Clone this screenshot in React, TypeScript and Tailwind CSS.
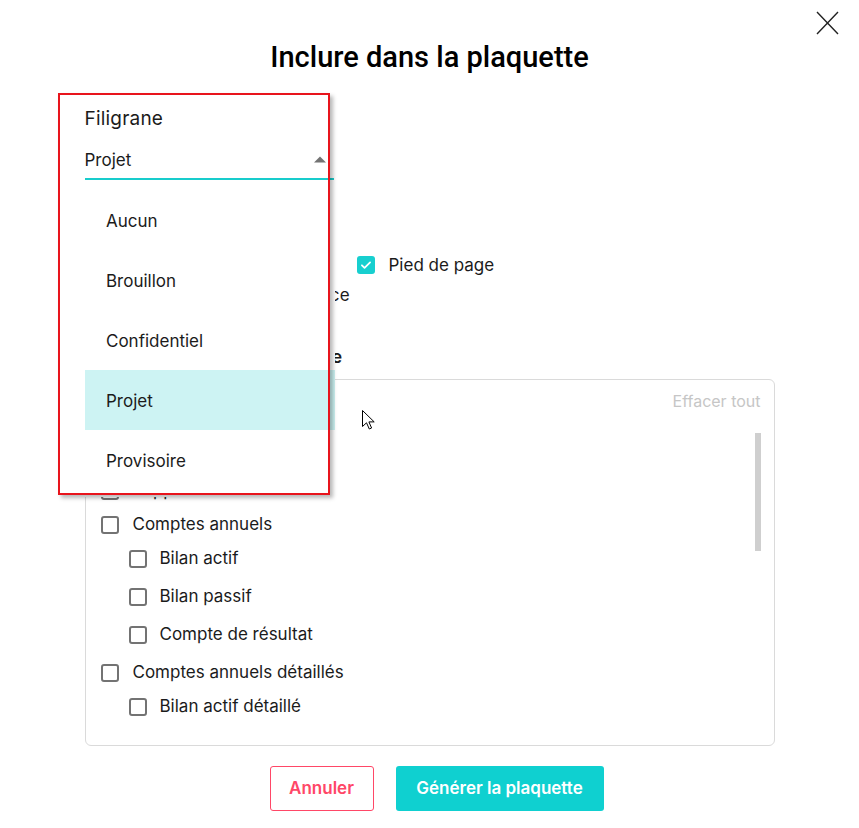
const Box = ({ checked = false }: { checked?: boolean }) =>
  checked ? (
    <span className="flex h-[18px] w-[18px] shrink-0 items-center justify-center rounded-[3px] bg-[#17cfcf]">
      <svg width="14" height="14" viewBox="0 0 24 24" fill="none">
        <path d="M5 12.5l4.5 4.5L19 7.5" stroke="#fff" strokeWidth="3" strokeLinecap="round" strokeLinejoin="round" />
      </svg>
    </span>
  ) : (
    <span className="h-[18px] w-[18px] shrink-0 rounded-[3px] border-2 border-[#737373] bg-white" />
  );

const tree = [
  { label: "Page de garde", children: [] as string[] },
  { label: "Rapport de mission", children: [] as string[] },
  { label: "Comptes annuels", children: ["Bilan actif", "Bilan passif", "Compte de résultat"] },
  { label: "Comptes annuels détaillés", children: ["Bilan actif détaillé"] },
];

const options = ["Aucun", "Brouillon", "Confidentiel", "Projet", "Provisoire"];

export default function App() {
  return (
    <div className="relative h-[828px] w-[859px] overflow-hidden bg-white font-['Inter',sans-serif] text-[17px] text-[#1b1b1b]">
      <button className="absolute left-[816px] top-[11px]">
        <svg width="23" height="24" viewBox="0 0 23 24" fill="none">
          <path d="M1 1L22 23M22 1L1 23" stroke="#222" strokeWidth="1.4" />
        </svg>
      </button>

      <h1 className="pt-[39px] text-center font-['Roboto',sans-serif] text-[29px] font-medium leading-[36px] text-black">
        Inclure dans la plaquette
      </h1>

      <div className="mx-auto w-[690px]">
        {/* Filigrane select */}
        <div className="mt-[32px] w-[249px]">
          <p className="text-[19px] leading-[24px] tracking-[0.2px]">Filigrane</p>
          <div className="mt-[18px] flex h-[31px] items-start justify-between border-b-2 border-[#18cccc]">
            <span className="text-[17px] leading-[22px]">Projet</span>
            <svg width="12" height="7" viewBox="0 0 12 7" className="mr-[8px] mt-[7px]">
              <path d="M0 6.5L6 0.5L12 6.5z" fill="#737373" />
            </svg>
          </div>
        </div>

        {/* options */}
        <div className="mt-[76px] grid grid-cols-[272px_1fr]">
          <div className="flex flex-col gap-[12px]">
            <div className="flex items-center gap-[14px]">
              <Box checked />
              <span className="leading-[18px]">En-tête</span>
            </div>
            <div className="flex items-center gap-[14px]">
              <Box />
              <span className="whitespace-nowrap leading-[18px] tracking-[0.15px]">Comparatif N-1 de référence</span>
            </div>
          </div>
          <div className="flex items-start gap-[14px]">
            <Box checked />
            <span className="leading-[18px]">Pied de page</span>
          </div>
        </div>

        <h2 className="mt-[41px] text-[18px] font-semibold leading-[24px] tracking-[0.2px]">Documents dans la plaquette</h2>

        {/* list box */}
        <div className="mt-[10px] flex h-[367px] flex-col rounded-[6px] border border-[#dadada] pl-[15px] pr-[13px]">
          <div className="flex justify-end pt-[11px] text-[16px] leading-[20px] text-[#c6c6c6]">Effacer tout</div>
          <div className="mt-[22px] flex min-h-0 flex-1 gap-[8px] overflow-hidden">
            <div className="flex flex-1 flex-col gap-[4px] pt-[9px]">
              {tree.map((node) => (
                <div key={node.label} className="flex flex-col">
                  <div className="flex h-[30px] items-center gap-[14px]">
                    <Box />
                    <span>{node.label}</span>
                  </div>
                  {node.children.map((c) => (
                    <div key={c} className="flex h-[38px] items-center gap-[13px] pl-[28px]">
                      <Box />
                      <span>{c}</span>
                    </div>
                  ))}
                </div>
              ))}
            </div>
            <div className="w-[6px] shrink-0">
              <div className="h-[118px] w-[6px] bg-[#cfcfcf]" />
            </div>
          </div>
        </div>

        {/* buttons */}
        <div className="mt-[20px] flex justify-center gap-[22px] pl-[14px]">
          <button className="h-[45px] w-[104px] rounded-[3px] border border-[#ff4767] text-[17px] font-semibold text-[#ff4767]">
            Annuler
          </button>
          <button className="h-[45px] w-[208px] rounded-[3px] bg-[#0fd0d0] text-[17px] font-semibold text-white">
            Générer la plaquette
          </button>
        </div>
      </div>

      {/* open dropdown menu */}
      <ul className="absolute left-[85px] top-[182px] w-[250px] bg-white pt-[8px] pb-[7px] text-[17px]">
        {options.map((o) => (
          <li
            key={o}
            className={`flex h-[60px] items-center pl-[21px] pt-[4px] ${o === "Projet" ? "bg-[#cdf3f3]" : ""}`}
          >
            {o}
          </li>
        ))}
      </ul>

      {/* annotation frame */}
      <div className="pointer-events-none absolute left-[58px] top-[93px] h-[402px] w-[272px] border-2 border-[#e8141c] shadow-[3px_3px_4px_rgba(0,0,0,0.28)]" />

      {/* mouse pointer */}
      <svg className="absolute left-[362px] top-[410px]" width="13" height="20" viewBox="0 0 13 20">
        <path d="M0.5 0.5V16.5L4.5 12.8L7.3 19L9.6 18L6.9 11.9H12.2z" fill="#fff" stroke="#000" strokeWidth="1" strokeLinejoin="round" />
      </svg>
    </div>
  );
}
